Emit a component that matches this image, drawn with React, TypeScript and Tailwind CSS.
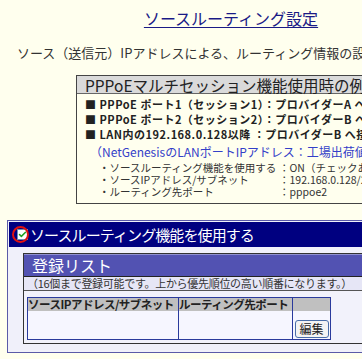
import { Check } from 'lucide-react'

const jp = { fontFamily: '"Noto Sans CJK JP", "Noto Sans", sans-serif' }

const examples = [
  '■ PPPoE ポート1（セッション1）：プロバイダーA へ接続',
  '■ PPPoE ポート2（セッション2）：プロバイダーB へ接続',
  '■ LAN内の192.168.0.128以降 ：プロバイダーB へ接続',
]

const settings = [
  ['・ソースルーティング機能を使用する', '：ON（チェックあり）'],
  ['・ソースIPアドレス/サブネット', '：192.168.0.128/25'],
  ['・ルーティング先ポート', '：pppoe2'],
]

export default function App() {
  return (
    <div className="w-[362px] h-[359px] overflow-hidden bg-[#ffffee] text-[#222]" style={jp}>
      <div className="w-[470px]">
        <div className="w-[462px] pt-[6px] text-center">
          <span className="text-[16px] leading-[22px] text-[#1a1a86] underline underline-offset-2">
            ソースルーティング設定
          </span>
        </div>

        <p className="mt-[15px] pl-[17px] text-[13px] leading-[16px] text-[#333] whitespace-nowrap">
          ソース（送信元）IPアドレスによる、ルーティング情報の設定を行います。
        </p>

        {/* example box */}
        <div className="ml-[76px] mt-[14px] w-[390px] border border-[#444]">
          <div className="h-[18px] border-b border-[#666] bg-[#dadada] pl-[8px] text-[15.5px] leading-[18px] whitespace-nowrap">
            PPPoEマルチセッション機能使用時の例
          </div>
          <div className="pt-[3px] pb-[5px] pl-[8px]">
            {examples.map((t) => (
              <div key={t} className="text-[11px] font-bold leading-[15px] tracking-[0.5px] whitespace-nowrap">
                {t}
              </div>
            ))}
            <div className="mt-[2px] pl-[5px] text-[12px] leading-[15px] text-[#3340c8] whitespace-nowrap">
              （NetGenesisのLANポートIPアドレス：工場出荷値の例）
            </div>
            <div className="mt-[3px] pl-[14px]">
              {settings.map(([a, b]) => (
                <div key={a} className="flex text-[10.5px] leading-[12px] text-[#333] whitespace-nowrap">
                  <span className="w-[180px]">{a}</span>
                  <span>{b}</span>
                </div>
              ))}
            </div>
          </div>
        </div>

        {/* source routing panel */}
        <div className="ml-[7px] mt-[16px] w-[440px] border border-[#5a5aa8] bg-[#f0f0fa] p-[1px]">
          <div className="relative flex h-[25px] items-center bg-[#000080] pl-[8px]">
            <span className="flex h-[11px] w-[11px] items-center justify-center border border-[#6b8fb8] bg-white">
              <Check size={9} strokeWidth={4} className="text-[#22a022]" />
            </span>
            <span className="absolute left-[3px] top-[4px] h-[17px] w-[17px] rounded-full border-2 border-[#e01010]" />
            <span className="ml-[2px] text-[15px] leading-[22px] tracking-[-0.9px] text-white">ソースルーティング機能を使用する</span>
          </div>

          <div className="px-[14px] pt-[6px] pb-[7px]">
            <div className="border border-[#333] bg-[#f2f2fb]">
              <div className="h-[22px] border-t border-[#9090d0] bg-[#5252b2] pl-[8px] text-[16px] leading-[20px] text-white">
                登録リスト
              </div>
              <div className="border-t border-[#222] bg-[#e6e6f6] pl-[3px] text-[11px] leading-[13px] tracking-[-0.3px] text-[#333] whitespace-nowrap">
                （16個まで登録可能です。上から優先順位の高い順番になります。）
              </div>
              <div className="border-t border-[#555] px-[3px] pt-[6px] pb-[3px]">
                <div className="w-[304px] border border-[#2a3a9c]">
                  <div className="flex h-[13px] bg-[#c0c0c0] text-[11.5px] font-bold leading-[13px] tracking-[-0.5px] whitespace-nowrap">
                    <span className="w-[151px] overflow-hidden border-r border-[#2a3a9c]">ソースIPアドレス/サブネット</span>
                    <span className="w-[114px] overflow-hidden border-r border-[#2a3a9c]">ルーティング先ポート</span>
                    <span className="flex-1" />
                  </div>
                  <div className="flex h-[28px] bg-[#f6f6ff]">
                    <span className="w-[151px] border-r border-[#2a3a9c]" />
                    <span className="w-[114px] border-r border-[#2a3a9c]" />
                    <span className="flex flex-1 items-end justify-center pb-[1px]">
                      <button className="h-[18px] w-[34px] rounded-[3px] border border-[#4a6ea8] bg-[#f4f4f4] text-[12px] leading-[16px] text-[#222]">
                        編集
                      </button>
                    </span>
                  </div>
                </div>
              </div>
            </div>
          </div>
        </div>
      </div>
    </div>
  )
}
